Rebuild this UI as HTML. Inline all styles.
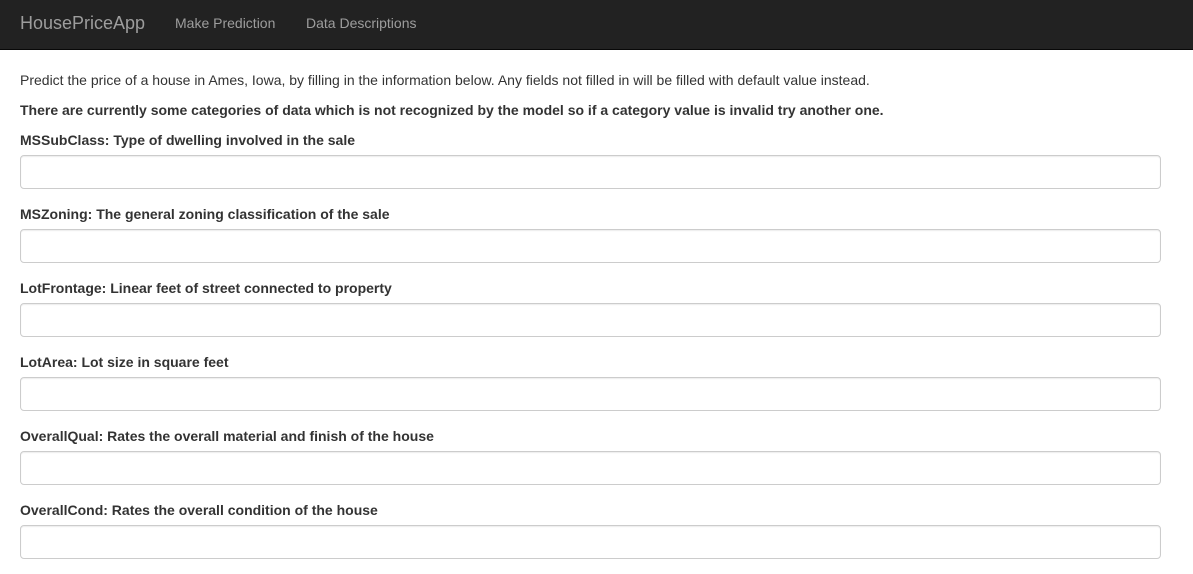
<!DOCTYPE html>
<html><head><meta charset="utf-8"><style>
*{box-sizing:border-box}
body{margin:0;font-family:"Liberation Sans",Arial,sans-serif;font-size:14px;line-height:20px;color:#333;background:#fff}
.nav{height:50px;background:#222;border-bottom:1px solid #080808;position:relative}
.brand{position:absolute;left:20px;top:13px;font-size:18px;line-height:20px;color:#9d9d9d}
.l{position:absolute;top:13px;color:#9d9d9d;font-size:14px}
.c{margin:20px 32px 0 20px}
p{margin:0 0 10px}
label{display:block;font-weight:bold;margin-bottom:5px}
.i{height:34px;border:1px solid #ccc;border-radius:4px;box-shadow:inset 0 1px 1px rgba(0,0,0,.075);margin-bottom:15px}
</style></head><body>
<div class="nav"><span class="brand">HousePriceApp</span><span class="l" style="left:175px">Make Prediction</span><span class="l" style="left:306px">Data Descriptions</span></div>
<div class="c">
<p>Predict the price of a house in Ames, Iowa, by filling in the information below. Any fields not filled in will be filled with default value instead.</p>
<p><b>There are currently some categories of data which is not recognized by the model so if a category value is invalid try another one.</b></p>
<label>MSSubClass: Type of dwelling involved in the sale</label><div class="i"></div>
<label>MSZoning: The general zoning classification of the sale</label><div class="i"></div>
<label>LotFrontage: Linear feet of street connected to property</label><div class="i"></div>
<label>LotArea: Lot size in square feet</label><div class="i"></div>
<label>OverallQual: Rates the overall material and finish of the house</label><div class="i"></div>
<label>OverallCond: Rates the overall condition of the house</label><div class="i"></div>
</div>
</body></html>
